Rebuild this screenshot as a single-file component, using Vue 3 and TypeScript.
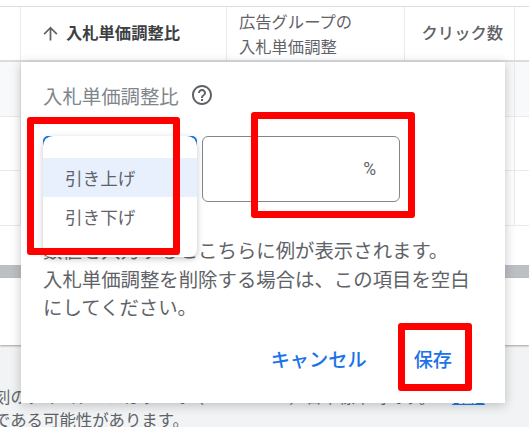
<script setup lang="ts">
const rows: number[] = [1, 2, 3]
</script>

<template>
  <div class="page">
    <div class="top"></div>
    <div class="head">
      <div class="c0"></div>
      <div class="c1 th strong">
        <svg width="21" height="21" viewBox="0 0 24 24"><path fill="#5f6368" d="M4 12l1.41 1.41L11 7.83V20h2V7.83l5.58 5.59L20 12l-8-8-8 8z" /></svg>
        <b>入札単価調整比</b>
      </div>
      <div class="c2 th">広告グループの<br />入札単価調整</div>
      <div class="c3 th">クリック数</div>
      <div class="c4"></div>
    </div>
    <div v-for="r in rows" :key="r" class="row" :class="{ shade: r === 1 }">
      <div class="c0"></div>
      <div class="c1"></div>
      <div class="c2"></div>
      <div class="c3"></div>
      <div class="c4"></div>
    </div>
    <div class="tail"></div>
    <div class="bar"></div>
    <div class="blank"></div>
    <div class="foot">
      <p>刻のタイムゾーンはすべて（GMT+09:00）日本標準時です。<a>詳細</a></p>
      <p>である可能性があります。</p>
    </div>

    <section class="dialog">
      <div class="title">入札単価調整比
        <svg class="help" width="24" height="24" viewBox="0 0 24 24"><path fill="#5f6368" d="M11 18h2v-2h-2v2zm1-16C6.48 2 2 6.48 2 12s4.48 10 10 10 10-4.48 10-10S17.52 2 12 2zm0 18c-4.41 0-8-3.59-8-8s3.59-8 8-8 8 3.59 8 8-3.59 8-8 8zm0-14c-2.21 0-4 1.79-4 4h2c0-1.1.9-2 2-2s2 .9 2 2c0 2-3 1.75-3 5h2c0-2.25 3-2.5 3-5 0-2.21-1.79-4-4-4z" /></svg>
      </div>
      <div class="fields">
        <div class="select"></div>
        <div class="input"><span>%</span></div>
      </div>
      <p class="hint">数値を入力するとこちらに例が表示されます。<br />入札単価調整を削除する場合は、この項目を空白<br />にしてください。</p>
      <div class="actions">
        <button>キャンセル</button>
        <button>保存</button>
      </div>
      <ul class="menu">
        <li class="on">引き上げ</li>
        <li>引き下げ</li>
      </ul>
    </section>

    <div class="mark m1"></div>
    <div class="mark m2"></div>
    <div class="mark m3"></div>
  </div>
</template>

<style>
html, body { margin: 0; background: #f1f3f4; }
</style>

<style scoped>
.page {
  position: relative;
  width: 529px;
  height: 427px;
  overflow: hidden;
  background: #f1f3f4;
  color: #3c4043;
  font-family: "Roboto", "Noto Sans CJK JP", sans-serif;
}
.top { height: 6px; background: #fff; border-bottom: 1px solid #dadce0; }
.head, .row { display: grid; grid-template-columns: 21px 206px 178px 110px 1fr; background: #fff; box-sizing: border-box; }
.head { height: 55px; border-bottom: 2px solid #dadce0; }
.row { height: 54.5px; border-bottom: 1px solid #e8eaed; }
.head > div, .row > div { border-right: 1px solid #e8eaed; }
.head .c4, .row .c4 { border-right: 0; }
.row.shade { background: #f8f9fa; }
.th { display: flex; align-items: center; font-size: 16.3px; line-height: 25px; padding-left: 12px; color: #5f6368; white-space: nowrap; }
.c2.th { display: block; padding-top: 3px; }
.strong { padding-left: 19px; color: #3c4043; gap: 5px; }
.strong b { font-weight: 700; }
.c3.th { justify-content: flex-end; padding: 0 11px 0 0; font-weight: 500; }
.tail { height: 39.5px; background: #fff; }
.bar { height: 13px; background: #bcbfc4; }
.blank { height: 67px; background: #fff; box-shadow: 0 1px 2px rgba(60, 64, 67, .45); }
.foot { padding-top: 42px; font-size: 16.4px; line-height: 22.5px; color: #5f6368; margin-left: -6px; }
.foot p { margin: 0; white-space: nowrap; }
.foot a { color: #1a73e8; text-decoration: underline; margin-left: 17px; }
.dialog {
  position: absolute;
  left: 21px;
  top: 62px;
  width: 484px;
  height: 341px;
  box-sizing: border-box;
  padding: 21px 22px 0;
  background: #fff;
  box-shadow: 0 2px 10px rgba(60, 64, 67, .3);
}
.title { display: flex; align-items: center; gap: 11px; height: 24px; font-size: 19.4px; color: #80868b; white-space: nowrap; }
.fields { display: flex; gap: 5px; margin-top: 29px; }
.select { width: 154px; height: 66px; border-radius: 5px; border: 2px solid #1a73e8; box-sizing: border-box; }
.input {
  width: 198px;
  height: 66px;
  box-sizing: border-box;
  border: 1px solid #80868b;
  border-radius: 6px;
  display: flex;
  align-items: center;
  justify-content: flex-end;
  padding-right: 23px;
  font-size: 17.5px;
  color: #5f6368;
}
.hint { margin: 36px 0 0; font-size: 19.4px; line-height: 28.5px; color: #5f6368; white-space: nowrap; }
.actions { display: flex; justify-content: flex-end; gap: 15px; margin-top: 17px; padding-right: 15px; }
.actions button {
  border: 0;
  background: none;
  padding: 0 16px;
  height: 36px;
  font: 500 19.2px "Roboto", "Noto Sans CJK JP", sans-serif;
  color: #1a73e8;
}
.menu {
  position: absolute;
  left: 22px;
  top: 74px;
  width: 154px;
  height: 121px;
  margin: 0;
  padding: 22px 0 0;
  box-sizing: border-box;
  list-style: none;
  background: #fff;
  border-radius: 10px 10px 8px 8px;
  box-shadow: 0 2px 6px rgba(60, 64, 67, .3);
  font-size: 17.6px;
  color: #5f6368;
}
.menu li { height: 39px; line-height: 42px; padding-left: 22px; }
.menu li.on { background: #e8f0fe; }
.mark { position: absolute; border: 7px solid #ff0000; border-radius: 3px; box-sizing: border-box; }
.m1 { left: 27px; top: 117px; width: 153px; height: 138px; }
.m2 { left: 251px; top: 112px; width: 164px; height: 106px; }
.m3 { left: 398px; top: 323px; width: 74px; height: 68px; }
</style>
